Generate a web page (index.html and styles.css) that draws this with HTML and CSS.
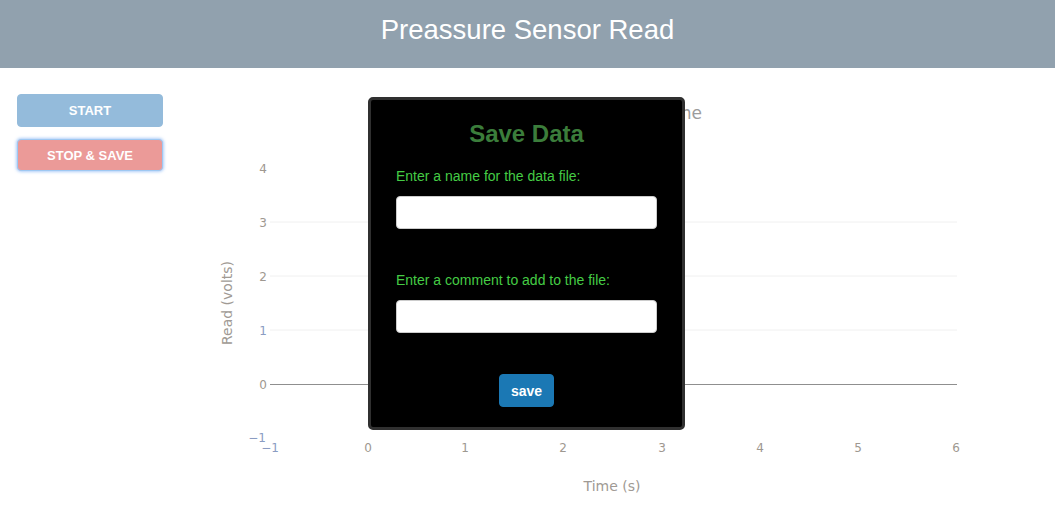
FILE: index.html
```html
<!DOCTYPE html>
<html>
<head>
<meta charset="utf-8">
<title>Preassure Sensor Read</title>
<link rel="stylesheet" href="styles.css">
</head>
<body>
<header class="topbar">
  <h1 class="topbar-title">Preassure Sensor Read</h1>
</header>
<main class="main">
  <aside class="sidebar">
    <button class="btn btn-start">START</button>
    <button class="btn btn-stop">STOP &amp; SAVE</button>
  </aside>
  <svg class="chart" width="855" height="459" viewBox="200 68 855 459" xmlns="http://www.w3.org/2000/svg">
    <text class="chart-title" x="702" y="119" text-anchor="end">Sensor Read vs Time</text>
    <g class="grid">
      <line x1="270" y1="222" x2="957" y2="222"/>
      <line x1="270" y1="276" x2="957" y2="276"/>
      <line x1="270" y1="330" x2="957" y2="330"/>
    </g>
    <line class="zeroline" x1="270" y1="384.5" x2="957" y2="384.5"/>
    <g class="ticks" text-anchor="end">
      <text x="267" y="173">4</text>
      <text x="267" y="227">3</text>
      <text x="267" y="281">2</text>
      <text class="blue" x="267" y="335">1</text>
      <text x="267" y="389">0</text>
      <text class="blue" x="266" y="442">−1</text>
    </g>
    <g class="ticks" text-anchor="middle">
      <text class="blue" x="270" y="452">−1</text>
      <text x="368" y="452">0</text>
      <text x="465" y="452">1</text>
      <text x="563" y="452">2</text>
      <text x="662" y="452">3</text>
      <text x="760" y="452">4</text>
      <text x="858" y="452">5</text>
      <text x="956" y="452">6</text>
    </g>
    <text class="axis-title" x="612" y="491" text-anchor="middle">Time (s)</text>
    <text class="axis-title" x="232" y="303" text-anchor="middle" transform="rotate(-90 232 303)">Read (volts)</text>
  </svg>
</main>
<div class="modal">
  <h2 class="modal-title">Save Data</h2>
  <label class="field-label" for="fname">Enter a name for the data file:</label>
  <input class="field-input" id="fname" type="text">
  <label class="field-label field-label-second" for="fcomment">Enter a comment to add to the file:</label>
  <input class="field-input" id="fcomment" type="text">
  <div class="modal-actions">
    <button class="btn-save">save</button>
  </div>
</div>
</body>
</html>
```
FILE: styles.css
```css
html, body {
  margin: 0;
  padding: 0;
  background: #ffffff;
  font-family: "Liberation Sans", Arial, Helvetica, sans-serif;
}

.topbar {
  background: #91a1ae;
  height: 68px;
  box-sizing: border-box;
  padding-top: 14px;
}

.topbar-title {
  margin: 0;
  text-align: center;
  color: #ffffff;
  font-size: 27.5px;
  line-height: 32px;
  font-weight: normal;
}

.main {
  display: flex;
  align-items: flex-start;
}

.sidebar {
  width: 200px;
  flex: none;
  box-sizing: border-box;
  padding: 26px 0 0 17px;
  display: flex;
  flex-direction: column;
}

.btn {
  width: 146px;
  box-sizing: border-box;
  border-radius: 4px;
  color: #ffffff;
  font-family: "Liberation Sans", Arial, sans-serif;
  font-weight: bold;
  font-size: 13px;
  padding: 0;
  cursor: pointer;
}

.btn-start {
  height: 33px;
  background: #94bbdb;
  border: 1px solid #94bbdb;
}

.btn-stop {
  margin-top: 12px;
  height: 32px;
  background: #eb9a98;
  border: 1px solid #9ec8f2;
  box-shadow: 0 0 3px 1px rgba(130, 180, 245, 0.65);
}

.chart {
  display: block;
  flex: none;
  font-family: "DejaVu Sans", Verdana, sans-serif;
}

.chart-title {
  font-size: 17px;
  fill: #9c9c9c;
}

.grid line {
  stroke: #f0f0f0;
  stroke-width: 1;
}

.zeroline {
  stroke: #8f8f8f;
  stroke-width: 1;
}

.ticks text {
  font-size: 12px;
  fill: #9e9890;
}

.ticks text.blue {
  fill: #8b9cc2;
}

.axis-title {
  font-size: 14px;
  fill: #a09a94;
}

.modal {
  position: absolute;
  left: 368px;
  top: 97px;
  width: 317px;
  height: 333px;
  box-sizing: border-box;
  background: #000000;
  border: 3px solid #303030;
  border-radius: 5px;
  padding: 20px 25px 20px 25px;
  display: flex;
  flex-direction: column;
}

.modal-title {
  margin: 0;
  text-align: center;
  color: #3b7d3b;
  font-size: 24px;
  line-height: 28px;
  font-weight: bold;
}

.field-label {
  display: block;
  margin-top: 18px;
  color: #45cc45;
  font-size: 14px;
  line-height: 20px;
}

.field-label-second {
  margin-top: 41px;
}

.field-input {
  display: block;
  margin: 10px 0 0 0;
  width: 100%;
  height: 33px;
  box-sizing: border-box;
  border: 1px solid #cccccc;
  border-radius: 4px;
  background: #ffffff;
  padding: 0 8px;
  font-size: 14px;
}

.modal-actions {
  margin-top: 41px;
  display: flex;
  justify-content: center;
}

.btn-save {
  width: 55px;
  height: 33px;
  background: #1b78b4;
  border: 1px solid #1b78b4;
  border-radius: 4px;
  color: #ffffff;
  font-family: "Liberation Sans", Arial, sans-serif;
  font-weight: bold;
  font-size: 14px;
  padding: 0;
}
```
